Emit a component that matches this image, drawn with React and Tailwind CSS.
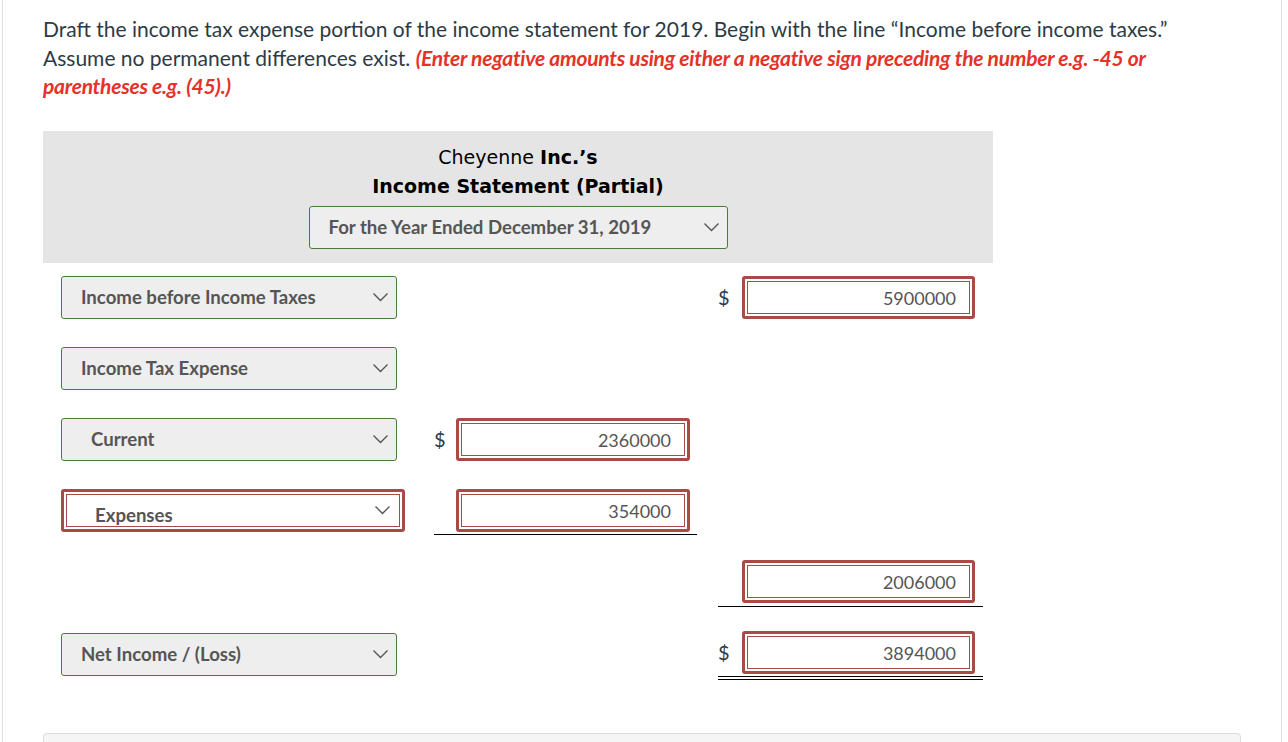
import React from 'react';

const Chevron = () => (
  <svg width="17" height="10" viewBox="0 0 17 10" className="shrink-0">
    <polyline points="1.5,1.5 8.5,8.5 15.5,1.5" fill="none" stroke="#555" strokeWidth="1.4" />
  </svg>
);

const Select = ({ label, pad = 'pl-[19px]', error = false, width = 'w-[336px]' }) => {
  if (error) {
    return (
      <div className={`${width} h-[43px] border-[3px] border-[#a84a45] rounded-[3px] bg-white p-[2px]`}>
        <div className={`h-full border border-[#a84a45] flex items-end justify-between pr-[8px] overflow-hidden ${pad}`}>
          <span className="text-[18.6px] leading-[24px] font-bold text-[#555] translate-y-[1px]">{label}</span>
          <span className="self-center"><Chevron /></span>
        </div>
      </div>
    );
  }
  return (
    <div className={`${width} h-[43px] border border-[#4b7b3c] rounded-[3px] bg-[#eeeeee] flex items-center justify-between pr-[7px] ${pad}`}>
      <span className="text-[18.6px] font-bold text-[#555] translate-y-[1px]">{label}</span>
      <Chevron />
    </div>
  );
};

const Amount = ({ value, width }) => (
  <div className={`${width} h-[43px] border-[3px] border-[#a84a45] rounded-[3px] bg-white p-[2px]`}>
    <div className="h-full border border-[#a84a45] flex items-center justify-end pr-[13px] text-[18px] text-[#555]">
      <span className="translate-y-[1px]">{value}</span>
    </div>
  </div>
);

const Dollar = ({ show, w }) => (
  <span className={`${w} text-[20px] text-[#2d3b45] leading-none`}>{show ? '$' : ''}</span>
);

const Col2 = ({ value, dollar, line }) => (
  <div className={`w-[263px] flex items-center ${line ? 'border-b border-black pb-[2px]' : ''}`}>
    <Dollar show={dollar} w="w-[22px]" />
    <Amount value={value} width="w-[234px]" />
  </div>
);

const Col3 = ({ value, dollar, line, double }) => (
  <div
    className={`w-[265px] flex items-center ${line ? 'border-b border-black pb-[3px]' : ''} ${
      double ? 'border-b-4 border-double border-black pb-[2px]' : ''
    }`}
  >
    <Dollar show={dollar} w="w-[24px]" />
    <Amount value={value} width="w-[233px]" />
  </div>
);

const Row = ({ children, mid, right }) => (
  <div className="flex h-[71px]">
    <div className="w-[372px] pl-[18px]">{children}</div>
    <div className="w-[290px] pl-[19px]">{mid}</div>
    <div className="w-[288px] pl-[13px]">{right}</div>
  </div>
);

export default function App() {
  return (
    <div className="min-h-[742px] bg-white font-['Lato','Noto_Sans',sans-serif] overflow-hidden">
      <div className="mx-[2px] w-[1280px] min-h-[742px] border-x border-[#e0e0e0] pl-[40px] pt-[15px]">
        <p className="text-[21px] leading-[28.6px] text-[#2d3b45] whitespace-nowrap">
          Draft the income tax expense portion of the income statement for 2019. Begin with the line “Income before income taxes.”
          <br />
          Assume no permanent differences exist.{' '}
          <span className="text-[#e4322b] font-bold italic tracking-[-0.25px]">
            (Enter negative amounts using either a negative sign preceding the number e.g. -45 or
            <br />
            parentheses e.g. (45).)
          </span>
        </p>

        <div className="mt-[30px] w-[950px] h-[132px] bg-[#e5e5e5] flex flex-col items-center pt-[12px]">
          <div className="font-['DejaVu_Sans',sans-serif] text-[19px] leading-[28px] text-black">
            Cheyenne <span className="font-bold">Inc.’s</span>
          </div>
          <div className="font-['DejaVu_Sans',sans-serif] text-[19px] leading-[30px] font-bold text-black">
            Income Statement (Partial)
          </div>
          <div className="mt-[5px] w-[419px] h-[43px] border border-[#4b7b3c] rounded-[3px] bg-[#eeeeee] flex items-center justify-between pl-[19px] pr-[7px]">
            <span className="text-[18.6px] font-bold text-[#555] translate-y-[1px]">For the Year Ended December 31, 2019</span>
            <Chevron />
          </div>
        </div>

        <div className="pt-[13px]">
          <Row right={<Col3 value="5900000" dollar />}>
            <Select label="Income before Income Taxes" />
          </Row>
          <Row>
            <Select label="Income Tax Expense" />
          </Row>
          <Row mid={<Col2 value="2360000" dollar />}>
            <Select label="Current" pad="pl-[29px]" />
          </Row>
          <Row mid={<Col2 value="354000" line />}>
            <Select label="Expenses" pad="pl-[28px]" error width="w-[344px]" />
          </Row>
          <Row right={<Col3 value="2006000" line />} />
          <div className="flex h-[71px]">
            <div className="w-[372px] pl-[18px] pt-[2px]">
              <Select label="Net Income / (Loss)" />
            </div>
            <div className="w-[290px]" />
            <div className="w-[288px] pl-[13px]">
              <Col3 value="3894000" dollar double />
            </div>
          </div>
        </div>

        <div className="mt-[31px] w-[1198px] h-[20px] border border-[#dcdcdc] rounded-t-[4px] bg-[#f5f5f5]" />
      </div>
    </div>
  );
}
